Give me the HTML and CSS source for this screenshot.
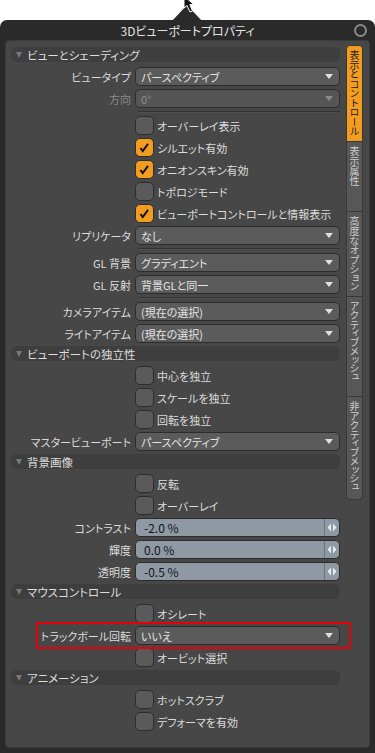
FILE: index.html
```html
<!DOCTYPE html>
<html lang="ja">
<head>
	<meta charset="UTF-8">
	<title>3Dビューポートプロパティ</title>
	<link rel="stylesheet" href="styles.css">
</head>
<body>
	<svg class="cursor" width="16" height="14" viewBox="0 0 16 14">
		<path d="M2 -4 L2 8 L5 5.5 L8 12 L10.5 11 L7.8 4.6 L12 4.6 Z" fill="#111" stroke="#fff" stroke-width="1"/>
	</svg>
	<div class="window">
		<div class="notch"></div>
		<div class="title">3Dビューポートプロパティ<span class="close"></span></div>
		<div class="panel">
			<div class="form">

				<div class="head first"><i></i>ビューとシェーディング</div>
				<div class="row"><span class="lbl">ビュータイプ</span><div class="sel">パースペクティブ<b></b></div></div>
				<div class="row"><span class="lbl off">方向</span><div class="sel dis">0°<b></b></div></div>
				<div class="sep"></div>
				<div class="row chk"><span class="box"></span>オーバーレイ表示</div>
				<div class="row chk"><span class="box on"><svg viewBox="0 0 19 19"><path d="M5 10 L7.5 13.5 L13.5 5.5" /></svg></span>シルエット有効</div>
				<div class="row chk"><span class="box on"><svg viewBox="0 0 19 19"><path d="M5 10 L7.5 13.5 L13.5 5.5" /></svg></span>オニオンスキン有効</div>
				<div class="row chk"><span class="box"></span>トポロジモード</div>
				<div class="row chk"><span class="box on"><svg viewBox="0 0 19 19"><path d="M5 10 L7.5 13.5 L13.5 5.5" /></svg></span>ビューポートコントロールと情報表示</div>
				<div class="row"><span class="lbl">リプリケータ</span><div class="sel">なし<b></b></div></div>
				<div class="sep"></div>
				<div class="row"><span class="lbl">GL 背景</span><div class="sel">グラディエント<b></b></div></div>
				<div class="row"><span class="lbl">GL 反射</span><div class="sel">背景GLと同一<b></b></div></div>
				<div class="sep"></div>
				<div class="row"><span class="lbl">カメラアイテム</span><div class="sel">(現在の選択)<b></b></div></div>
				<div class="row"><span class="lbl">ライトアイテム</span><div class="sel">(現在の選択)<b></b></div></div>

				<div class="head"><i></i>ビューポートの独立性</div>
				<div class="row chk"><span class="box"></span>中心を独立</div>
				<div class="row chk"><span class="box"></span>スケールを独立</div>
				<div class="row chk"><span class="box"></span>回転を独立</div>
				<div class="row"><span class="lbl">マスタービューポート</span><div class="sel">パースペクティブ<b></b></div></div>

				<div class="head"><i></i>背景画像</div>
				<div class="row chk"><span class="box"></span>反転</div>
				<div class="row chk"><span class="box"></span>オーバーレイ</div>
				<div class="row"><span class="lbl">コントラスト</span><div class="num"><span class="v">-2.0 %</span><span class="arr"><svg width="10" height="9" viewBox="0 0 10 9"><path d="M4 0.5 L0.5 4.5 L4 8.5 Z M6 0.5 L9.5 4.5 L6 8.5 Z" fill="#e8ecf0"/></svg></span></div></div>
				<div class="row"><span class="lbl">輝度</span><div class="num"><span class="v">0.0 %</span><span class="arr"><svg width="10" height="9" viewBox="0 0 10 9"><path d="M4 0.5 L0.5 4.5 L4 8.5 Z M6 0.5 L9.5 4.5 L6 8.5 Z" fill="#e8ecf0"/></svg></span></div></div>
				<div class="row"><span class="lbl">透明度</span><div class="num"><span class="v">-0.5 %</span><span class="arr"><svg width="10" height="9" viewBox="0 0 10 9"><path d="M4 0.5 L0.5 4.5 L4 8.5 Z M6 0.5 L9.5 4.5 L6 8.5 Z" fill="#e8ecf0"/></svg></span></div></div>

				<div class="head"><i></i>マウスコントロール</div>
				<div class="row chk"><span class="box"></span>オシレート</div>
				<div class="row mark"><span class="lbl">トラックボール回転</span><div class="sel">いいえ<b></b></div></div>
				<div class="row chk"><span class="box"></span>オービット選択</div>

				<div class="head"><i></i>アニメーション</div>
				<div class="row chk"><span class="box"></span>ホットスクラブ</div>
				<div class="row chk"><span class="box"></span>デフォーマを有効</div>
			</div>

			<div class="tabs">
				<div class="tab on t1">表示とコントロール</div>
				<div class="tab t2">表示属性</div>
				<div class="tab t3">高度なオプション</div>
				<div class="tab t4">アクティブメッシュ</div>
				<div class="tab t5">非アクティブメッシュ</div>
			</div>
		</div>
	</div>
</body>
</html>
```

FILE: styles.css
```css
*{
	box-sizing: border-box;
	margin: 0;
	padding: 0;
}
body{
	background: #fff;
	font-family: "Noto Sans CJK JP", "Noto Sans", sans-serif;
	font-size: 11px;
	color: #dcdcdc;
	font-feature-settings: "palt";
	overflow: hidden;
}
.cursor{
	position: absolute;
	left: 182px;
	top: 0;
	z-index: 2;
}
.window{
	position: relative;
	margin-top: 20px;
	height: 733px;
	background: #2a2a2a;
	border-radius: 7px 7px 0 0;
	padding: 0 5px;
}
.notch{
	position: absolute;
	left: 172px;
	top: -15px;
	width: 30px;
	height: 16px;
	background: #2a2a2a;
	clip-path: polygon(50% 0, 100% 100%, 0 100%);
}
.title{
	position: relative;
	height: 20px;
	line-height: 21px;
	text-align: center;
	font-size: 12px;
	color: #e2e2e2;
}
.close{
	position: absolute;
	right: 3px;
	top: 4px;
	width: 13px;
	height: 13px;
	border: 2px solid #8a8a8a;
	border-radius: 50%;
}
.panel{
	display: flex;
	gap: 6px;
	height: 708px;
	background: #474747;
	border: 1px solid #3a3a3a;
	border-radius: 4px;
	padding: 6px 6px 0 5px;
}
.form{
	width: 329px;
}

/* section header */
.head{
	display: flex;
	align-items: center;
	gap: 5px;
	height: 15px;
	margin: 1px 0 5px;
	padding-left: 5px;
	background: #3e3e3e;
	border-radius: 6px;
	color: #dedede;
	font-size: 11.5px;
}
.head.first{
	margin-top: 0;
}
.head i{
	width: 0;
	height: 0;
	border-left: 3.5px solid transparent;
	border-right: 3.5px solid transparent;
	border-top: 6px solid #7a7a7a;
}

/* rows */
.row{
	display: flex;
	align-items: center;
	height: 19px;
	margin-bottom: 3px;
	white-space: nowrap;
}
.row.chk{
	padding-left: 124px;
}
.lbl{
	width: 120px;
	margin-right: 4px;
	text-align: right;
}
.lbl.off{
	color: #8a8a8a;
}
.sep{
	height: 1px;
	background: #333;
	margin: 2px 0 4px 127px;
	box-shadow: 0 1px 0 #4f4f4f;
}

/* dropdown */
.sel{
	flex: 1;
	display: flex;
	align-items: center;
	justify-content: space-between;
	height: 19px;
	padding: 0 6px 0 5px;
	background: #5b5b5b;
	border: 1px solid #2c2c2c;
	border-radius: 5px;
	color: #e4e4e4;
}
.sel b{
	width: 0;
	height: 0;
	border-left: 4px solid transparent;
	border-right: 4px solid transparent;
	border-top: 5px solid #e0e0e0;
}
.sel.dis{
	background: #555;
	color: #8c8c8c;
}
.sel.dis b{
	border-top-color: #8c8c8c;
}

/* checkbox */
.box{
	width: 19px;
	height: 19px;
	margin-right: 3px;
	background: #5a5a5a;
	border: 1px solid #2e2e2e;
	border-radius: 5px;
}
.box.on{
	background: #f39d20;
}
.box svg{
	display: block;
	width: 17px;
	height: 17px;
}
.box path{
	fill: none;
	stroke: #111;
	stroke-width: 2.2;
}

/* number field */
.num{
	flex: 1;
	display: flex;
	height: 19px;
	background: #8f99a3;
	border: 1px solid #2c2c2c;
	border-radius: 5px;
	color: #14141c;
	font-size: 12px;
	overflow: hidden;
}
.num .v{
	flex: 1;
	padding-left: 8px;
	line-height: 17px;
}
.num .arr{
	display: flex;
	align-items: center;
	justify-content: center;
	width: 15px;
	border-left: 1px solid #6c747c;
}

/* highlighted row */
.mark{
	position: relative;
}
.mark:after{
	content: '';
	position: absolute;
	left: 25px;
	right: -11px;
	top: -4px;
	bottom: -4px;
	border: 2px solid #e5000a;
}

/* side tabs */
.tabs{
	display: flex;
	flex-direction: column;
	width: 17px;
	margin-top: -2px;
}
.tab{
	writing-mode: vertical-rl;
	font-feature-settings: "vpal";
	font-size: 10px;
	line-height: 15px;
	padding-top: 4px;
	background: #575757;
	color: #d0d0d0;
	border: 1px solid #383838;
	border-top: none;
	white-space: nowrap;
	overflow: hidden;
}
.tab.on{
	background: #f39d20;
	color: #1a1a1a;
	border-top: 1px solid #383838;
	border-radius: 4px 4px 0 0;
}
.t1{ height: 97px; }
.t2{ height: 70px; }
.t3{ height: 85px; }
.t4{ height: 100px; }
.t5{ height: 103px; border-radius: 0 0 5px 5px; }
```
